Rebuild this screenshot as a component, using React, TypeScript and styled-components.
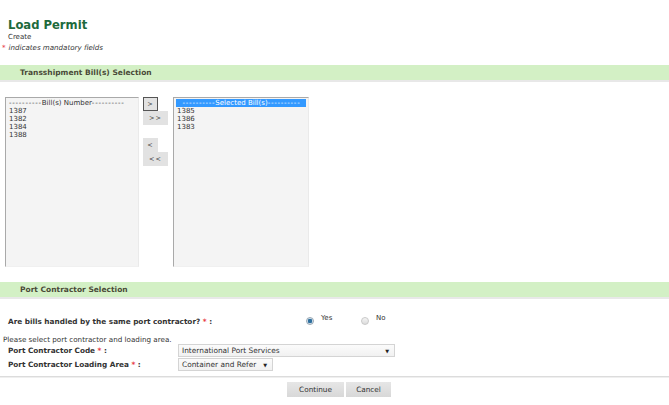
import React from "react";
import styled, { createGlobalStyle } from "styled-components";

const Global = createGlobalStyle`
  html, body { margin: 0; padding: 0; background: #fff; }
  body { font-family: "DejaVu Sans", Verdana, sans-serif; color: #333; }
`;

const Page = styled.div`
  width: 669px;
  height: 405px;
  overflow: hidden;
  position: relative;
`;

const Header = styled.div`
  padding: 17px 0 0 0;
  height: 48px;
  box-sizing: border-box;
`;

const Title = styled.h1`
  margin: 0 0 0 8px;
  font-size: 11.6px;
  line-height: 16px;
  font-weight: bold;
  color: #1d6a3c;
`;

const SubTitle = styled.div`
  margin-left: 8px;
  font-size: 7px;
  line-height: 8px;
  color: #333;
`;

const Mandatory = styled.div`
  margin-top: 3px;
  padding-left: 2px;
  font-size: 7.1px;
  line-height: 8px;
  font-style: italic;
  color: #333;
`;

const Star = styled.span`
  color: #e8383d;
  font-style: normal;
  margin-right: 3px;
`;

const SectionBar = styled.div<{ $top: number }>`
  margin-top: ${(p) => p.$top}px;
  height: 15px;
  line-height: 15px;
  background: #d3f0c5;
  border-bottom: 2px solid #e8e8e8;
  padding-left: 20px;
  font-size: 7.5px;
  font-weight: bold;
  color: #4a4a38;
`;

const Transfer = styled.div`
  display: flex;
  align-items: flex-start;
  padding: 15px 0 0 5px;
`;

const ListBox = styled.div<{ $w: number }>`
  width: ${(p) => p.$w}px;
  height: 170px;
  box-sizing: border-box;
  background: #f4f4f4;
  border-top: 1px solid #a9a9a9;
  border-left: 1px solid #a9a9a9;
  border-right: 1px solid #eaeaea;
  border-bottom: 1px solid #f0f0f0;
  padding: 1px 2px;
  font-size: 7px;
  line-height: 8px;
  color: #333;
`;

const Option = styled.div<{ $selected?: boolean }>`
  white-space: nowrap;
  overflow: hidden;
  height: 8px;
  padding-left: 1px;
  background: ${(p) => (p.$selected ? "#3399ff" : "transparent")};
  color: ${(p) => (p.$selected ? "#fff" : "#333")};
  text-align: ${(p) => (p.$selected ? "center" : "left")};
`;

const Dashes = styled.span`
  letter-spacing: 0.75px;
`;

const ButtonColumn = styled.div`
  width: 34px;
  display: flex;
  flex-direction: column;
  align-items: flex-start;
  padding-left: 4px;
  box-sizing: border-box;
`;

const MoveButton = styled.div<{ $wide?: boolean; $focus?: boolean; $gap?: number }>`
  width: ${(p) => (p.$wide ? 25 : 15)}px;
  height: 14px;
  margin-top: ${(p) => p.$gap ?? 0}px;
  box-sizing: border-box;
  background: #e2e2e2;
  border: ${(p) => (p.$focus ? "1px solid #555" : "none")};
  font-size: 6.5px;
  line-height: ${(p) => (p.$focus ? 12 : 14)}px;
  text-align: center;
  color: #333;
  letter-spacing: 1px;
`;

const QuestionRow = styled.div`
  display: grid;
  grid-template-columns: 298px 55px auto;
  align-items: center;
  padding: 17px 0 0 8px;
  height: 10px;
`;

const Label = styled.div`
  font-size: 7.3px;
  font-weight: bold;
  color: #333;
  white-space: nowrap;
`;

const Req = styled.span`
  color: #e8383d;
`;

const RadioItem = styled.div`
  display: flex;
  align-items: flex-start;
  gap: 7px;
  font-size: 7px;
  color: #333;
`;

const RadioText = styled.span`
  margin-top: -3px;
`;

const Radio = styled.span<{ $checked?: boolean }>`
  width: 8px;
  height: 8px;
  border-radius: 50%;
  box-sizing: border-box;
  border: 1px solid ${(p) => (p.$checked ? "#9aa7b3" : "#c9c9c9")};
  background: ${(p) =>
    p.$checked
      ? "radial-gradient(circle, #2e6f9e 0 2px, #cfe0ec 2.5px)"
      : "linear-gradient(#f4f4f4, #dcdcdc)"};
`;

const Hint = styled.div`
  margin-top: 10px;
  padding-left: 3px;
  font-size: 7.2px;
  line-height: 8px;
  color: #333;
`;

const FormGrid = styled.div`
  display: grid;
  grid-template-columns: 170px auto;
  row-gap: 1px;
  align-items: center;
  padding: 0 0 0 8px;
`;

const FakeSelect = styled.div<{ $width: number }>`
  width: ${(p) => p.$width}px;
  height: 13px;
  box-sizing: border-box;
  border: 1px solid #d4d4d4;
  background: linear-gradient(#fbfbfb, #f1f1f1);
  display: flex;
  align-items: center;
  justify-content: space-between;
  padding: 0 5px 0 3px;
  font-size: 7.4px;
  color: #333;
`;

const Caret = styled.span`
  font-size: 5px;
  color: #222;
`;

const Divider = styled.div`
  margin-top: 5px;
  height: 1px;
  background: #dcdcdc;
  border-bottom: 1px solid #efefef;
`;

const Actions = styled.div`
  display: flex;
  justify-content: flex-start;
  gap: 2px;
  padding: 4px 0 0 287px;
`;

const ActionButton = styled.div<{ $w: number }>`
  width: ${(p) => p.$w}px;
  height: 15px;
  line-height: 15px;
  background: linear-gradient(#e6e6e6, #d8d8d8);
  text-align: center;
  font-size: 7.3px;
  color: #333;
`;

const left = ["1387", "1382", "1384", "1388"];
const right = ["1385", "1386", "1383"];

export default function App() {
  return (
    <Page>
      <Global />
      <Header>
        <Title>Load Permit</Title>
        <SubTitle>Create</SubTitle>
        <Mandatory>
          <Star>*</Star>indicates mandatory fields
        </Mandatory>
      </Header>
      <SectionBar $top={17}>Transshipment Bill(s) Selection</SectionBar>
      <Transfer>
        <ListBox $w={134}>
          <Option>
            <Dashes>----------</Dashes>Bill(s) Number<Dashes>----------</Dashes>
          </Option>
          {left.map((n) => (
            <Option key={n}>{n}</Option>
          ))}
        </ListBox>
        <ButtonColumn>
          <MoveButton $focus>&gt;</MoveButton>
          <MoveButton $wide>&gt;&gt;</MoveButton>
          <MoveButton $gap={13}>&lt;</MoveButton>
          <MoveButton $wide>&lt;&lt;</MoveButton>
        </ButtonColumn>
        <ListBox $w={136}>
          <Option $selected>
            <Dashes>----------</Dashes>Selected Bill(s)<Dashes>----------</Dashes>
          </Option>
          {right.map((n) => (
            <Option key={n}>{n}</Option>
          ))}
        </ListBox>
      </Transfer>
      <SectionBar $top={15}>Port Contractor Selection</SectionBar>
      <QuestionRow>
        <Label>
          Are bills handled by the same port contractor? <Req>*</Req> :
        </Label>
        <RadioItem>
          <Radio $checked />
          <RadioText>Yes</RadioText>
        </RadioItem>
        <RadioItem>
          <Radio />
          <RadioText>No</RadioText>
        </RadioItem>
      </QuestionRow>
      <Hint>Please select port contractor and loading area.</Hint>
      <FormGrid>
        <Label>
          Port Contractor Code <Req>*</Req> :
        </Label>
        <FakeSelect $width={217}>
          International Port Services<Caret>▼</Caret>
        </FakeSelect>
        <Label>
          Port Contractor Loading Area <Req>*</Req> :
        </Label>
        <FakeSelect $width={95}>
          Container and Refer<Caret>▼</Caret>
        </FakeSelect>
      </FormGrid>
      <Divider />
      <Actions>
        <ActionButton $w={57}>Continue</ActionButton>
        <ActionButton $w={45}>Cancel</ActionButton>
      </Actions>
    </Page>
  );
}
